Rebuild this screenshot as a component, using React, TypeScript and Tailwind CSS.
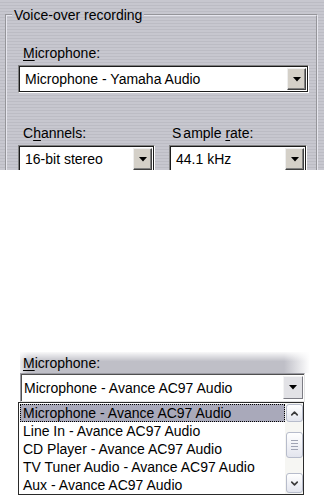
import { ChevronDown, ChevronUp } from 'lucide-react'

function Arrow() {
  return (
    <svg width="8" height="5" viewBox="0 0 8 5" className="block">
      <path d="M0 0h8L4 4.5z" fill="#000" />
    </svg>
  )
}

function ClassicCombo({ value, className }: { value: string; className: string }) {
  return (
    <div
      className={`flex items-stretch bg-white border border-t-[#808080] border-l-[#808080] border-b-white border-r-white ${className}`}
    >
      <div className="flex flex-1 items-stretch shadow-[inset_1px_1px_0_#1c1c1c,inset_-1px_-1px_0_#1c1c1c] p-[2px]">
        <div className="flex-1 pl-[4px] flex items-center whitespace-nowrap overflow-hidden">{value}</div>
        <div className="w-[19px] flex items-center justify-center bg-[#d4d0c8] border border-t-[#eeeeee] border-l-[#eeeeee] border-b-[#404040] border-r-[#404040] shadow-[inset_-1px_-1px_0_#808080]">
          <Arrow />
        </div>
      </div>
    </div>
  )
}

function ScrollButton({ children, className = '' }: { children?: React.ReactNode; className?: string }) {
  return (
    <div
      className={`w-[17px] flex items-center justify-center rounded-[3px] border border-[#b7bccb] bg-[linear-gradient(to_bottom,#ffffff,#e3e5ee)] ${className}`}
    >
      {children}
    </div>
  )
}

const items = [
  'Microphone - Avance AC97 Audio',
  'Line In - Avance AC97 Audio',
  'CD Player - Avance AC97 Audio',
  'TV Tuner Audio - Avance AC97 Audio',
  'Aux - Avance AC97 Audio',
]

export default function App() {
  return (
    <div className="w-[324px] h-[502px] overflow-hidden bg-white text-black text-[14px] leading-[16px] font-['Liberation_Sans',Arial,sans-serif]">
      {/* top dialog crop */}
      <div className="h-[170px] overflow-hidden pt-[7px] pl-[5px] bg-[repeating-linear-gradient(to_bottom,#c7c7cf_0px,#c7c7cf_2px,#bcbcc4_2px,#bcbcc4_3px)]">
        <fieldset className="w-[313px] h-[200px] border-2 border-[#e6e6ee] [border-style:groove]">
          <legend className="ml-[5px] px-[2px]">Voice-over recording</legend>
          <div className="pl-[11px] pr-[7px] pt-[22px]">
            <div className="ml-[5px] mb-[4px]">
              <span className="underline underline-offset-2">M</span>icrophone:
            </div>
            <ClassicCombo value="Microphone - Yamaha Audio" className="w-[291px] h-[28px]" />
            <div className="flex gap-[14px] mt-[32px]">
              <div className="flex flex-col gap-[4px]">
                <div className="ml-[5px]">
                  C<span className="underline underline-offset-2">h</span>annels:
                </div>
                <ClassicCombo value="16-bit stereo" className="w-[137px] h-[28px]" />
              </div>
              <div className="flex flex-col gap-[4px]">
                <div className="ml-[3px]">
                  <span className="mr-[2px]">S</span>ample <span className="underline underline-offset-2">r</span>ate:
                </div>
                <ClassicCombo value="44.1 kHz" className="w-[138px] h-[28px]" />
              </div>
            </div>
          </div>
        </fieldset>
      </div>

      {/* dropdown crop */}
      <div className="mt-[182px]">
        <div className="ml-[20px] w-[290px] h-[21px] pt-[3px] pl-[3px] bg-[linear-gradient(to_bottom,rgba(255,255,255,0.9),rgba(255,255,255,0)_45%),linear-gradient(to_right,rgba(192,192,200,0.3)_0px,#bfbfc7_8px,#bfbfc7_calc(100%-26px),rgba(255,255,255,0))]">
          <span className="underline underline-offset-2">M</span>icrophone:
        </div>
        <div className="ml-[20px] w-[285px] h-[29px] flex bg-white border border-[#9a9aa2] border-b-[#e4e4e4] border-r-[#e4e4e4] shadow-[inset_1px_1px_0_#505050]">
          <div className="flex-1 pl-[3px] flex items-center whitespace-nowrap">Microphone - Avance AC97 Audio</div>
          <div className="w-[20px] my-[2px] mr-[1px] flex items-center justify-center bg-[#e2e2e6] border border-t-[#f4f4f4] border-l-[#f4f4f4] border-b-[#7c7c84] border-r-[#7c7c84]">
            <Arrow />
          </div>
        </div>
        <div className="ml-[18px] w-[286px] h-[93px] flex bg-white border border-[#2a2a2a]">
          <div className="flex-1 pt-[1px] pl-[1px]">
            {items.map((item, i) => (
              <div
                key={item}
                className={`h-[18px] leading-[16px] pl-[2px] whitespace-nowrap ${
                  i === 0 ? 'bg-[#a9a9ba] border border-dotted border-black' : 'border border-transparent'
                }`}
              >
                {item}
              </div>
            ))}
          </div>
          <div className="w-[18px] flex flex-col items-center bg-[#f6f6f3] pt-[1px] pb-[1px]">
            <ScrollButton className="h-[18px]">
              <ChevronUp size={11} strokeWidth={3.5} color="#3a3a3a" />
            </ScrollButton>
            <ScrollButton className="h-[26px] mt-[10px] flex-col gap-[2px]">
              <div className="w-[7px] h-px bg-[#a0a4b4]" />
              <div className="w-[7px] h-px bg-[#a0a4b4]" />
              <div className="w-[7px] h-px bg-[#a0a4b4]" />
              <div className="w-[7px] h-px bg-[#a0a4b4]" />
            </ScrollButton>
            <div className="flex-1" />
            <ScrollButton className="h-[20px]">
              <ChevronDown size={11} strokeWidth={3.5} color="#3a3a3a" />
            </ScrollButton>
          </div>
        </div>
      </div>
    </div>
  )
}
